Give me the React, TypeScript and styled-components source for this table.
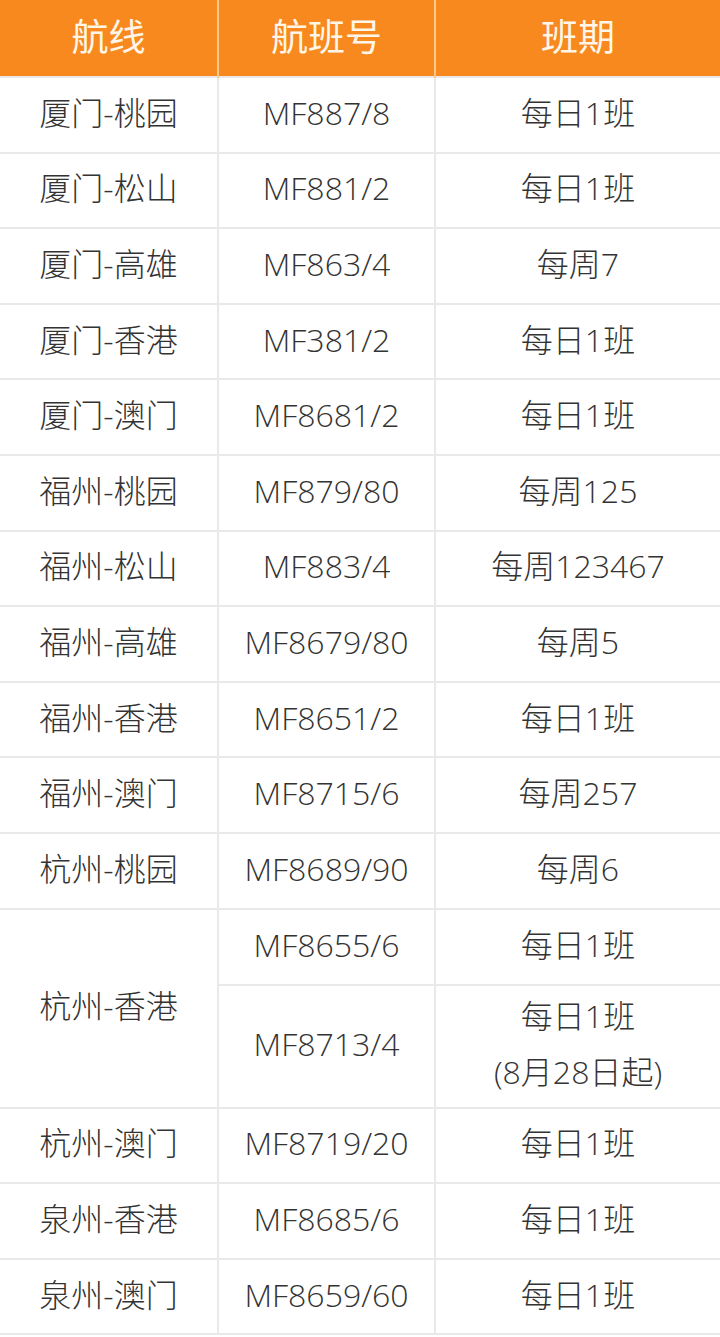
import styled, { createGlobalStyle } from 'styled-components'

const GlobalStyle = createGlobalStyle`
  html, body {
    margin: 0;
    padding: 0;
    background: #ffffff;
  }
  body {
    font-family: 'Open Sans', 'Noto Sans CJK SC', sans-serif;
  }
`

const Table = styled.table`
  width: 720px;
  border-collapse: collapse;
  table-layout: fixed;
  color: #333333;
`

const HeadCell = styled.th`
  height: 70px;
  padding: 0 0 6px;
  background: #f7891f;
  color: #fff6e8;
  font-family: 'Noto Sans CJK SC', sans-serif;
  font-size: 37px;
  font-weight: 400;
  text-align: center;
  vertical-align: middle;
  border-left: 2px solid #fbc98a;
  &:first-child {
    border-left: none;
  }
`

const Row = styled.tr<{ $h?: number }>`
  height: ${(p) => p.$h ?? 75.6}px;
`

const Cell = styled.td<{ $lh?: number }>`
  padding: 0 0 4px;
  font-size: 32px;
  font-weight: 300;
  line-height: ${(p) => p.$lh ?? 40}px;
  text-align: center;
  vertical-align: middle;
  border: 2px solid #e9e9e9;
  &:first-child {
    border-left: none;
  }
  &:last-child {
    border-right: none;
  }
`

type Route = { route: string; flights: { no: string; schedule: string[]; h?: number }[] }

const routes: Route[] = [
  { route: '厦门-桃园', flights: [{ no: 'MF887/8', schedule: ['每日1班'] }] },
  { route: '厦门-松山', flights: [{ no: 'MF881/2', schedule: ['每日1班'] }] },
  { route: '厦门-高雄', flights: [{ no: 'MF863/4', schedule: ['每周7'] }] },
  { route: '厦门-香港', flights: [{ no: 'MF381/2', schedule: ['每日1班'] }] },
  { route: '厦门-澳门', flights: [{ no: 'MF8681/2', schedule: ['每日1班'] }] },
  { route: '福州-桃园', flights: [{ no: 'MF879/80', schedule: ['每周125'] }] },
  { route: '福州-松山', flights: [{ no: 'MF883/4', schedule: ['每周123467'] }] },
  { route: '福州-高雄', flights: [{ no: 'MF8679/80', schedule: ['每周5'] }] },
  { route: '福州-香港', flights: [{ no: 'MF8651/2', schedule: ['每日1班'] }] },
  { route: '福州-澳门', flights: [{ no: 'MF8715/6', schedule: ['每周257'] }] },
  { route: '杭州-桃园', flights: [{ no: 'MF8689/90', schedule: ['每周6'] }] },
  {
    route: '杭州-香港',
    flights: [
      { no: 'MF8655/6', schedule: ['每日1班'], h: 76 },
      { no: 'MF8713/4', schedule: ['每日1班', '(8月28日起)'], h: 123 },
    ],
  },
  { route: '杭州-澳门', flights: [{ no: 'MF8719/20', schedule: ['每日1班'] }] },
  { route: '泉州-香港', flights: [{ no: 'MF8685/6', schedule: ['每日1班'] }] },
  { route: '泉州-澳门', flights: [{ no: 'MF8659/60', schedule: ['每日1班'] }] },
]

export default function App() {
  return (
    <>
      <GlobalStyle />
      <Table>
        <colgroup>
          <col style={{ width: 218 }} />
          <col style={{ width: 217 }} />
          <col style={{ width: 285 }} />
        </colgroup>
        <thead>
          <tr>
            <HeadCell>航线</HeadCell>
            <HeadCell>航班号</HeadCell>
            <HeadCell>班期</HeadCell>
          </tr>
        </thead>
        <tbody>
          {routes.map((r) =>
            r.flights.map((f, i) => (
              <Row key={r.route + f.no} $h={f.h}>
                {i === 0 && <Cell rowSpan={r.flights.length}>{r.route}</Cell>}
                <Cell>{f.no}</Cell>
                <Cell $lh={f.schedule.length > 1 ? 56 : 40}>
                  {f.schedule.map((s) => (
                    <div key={s}>{s}</div>
                  ))}
                </Cell>
              </Row>
            )),
          )}
        </tbody>
      </Table>
    </>
  )
}
